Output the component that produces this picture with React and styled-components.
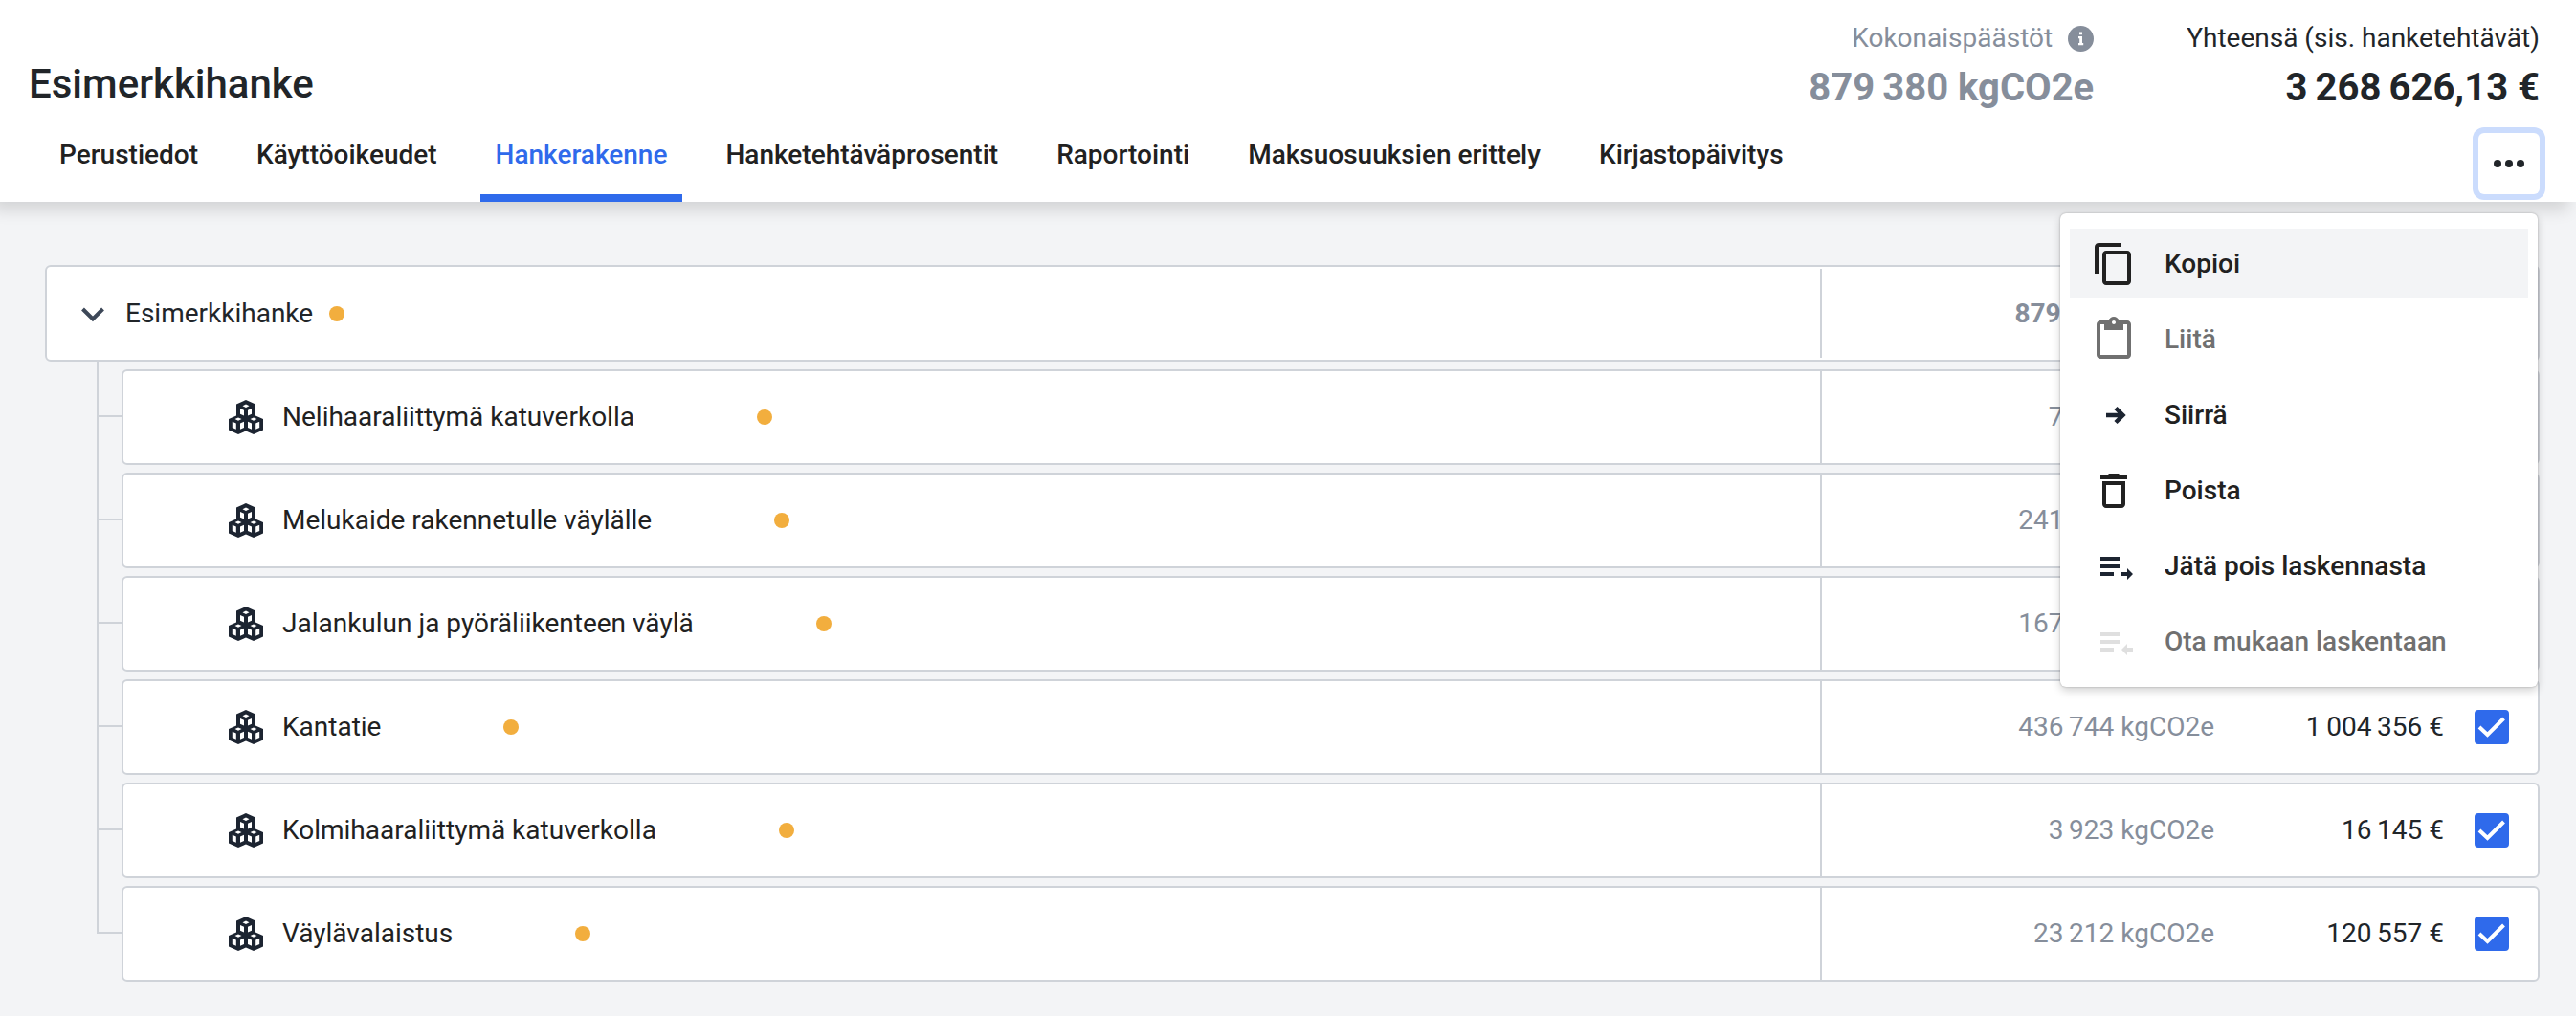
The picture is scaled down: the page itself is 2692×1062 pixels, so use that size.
import React from "react";
import styled, { createGlobalStyle, css } from "styled-components";
import { MdContentCopy, MdContentPaste, MdDeleteOutline } from "react-icons/md";

const colors = {
  page: "#f3f4f6",
  surface: "#ffffff",
  line: "#cfd3d9",
  ink: "#212529",
  strong: "#212121",
  navy: "#1c2431",
  muted: "#868e9b",
  disabled: "#707070",
  faint: "#dfdfdf",
  primary: "#2f6aeb",
  ring: "#cbdcfd",
  dot: "#f2ae3e",
};

const GlobalStyle = createGlobalStyle`
  *, *::before, *::after { box-sizing: border-box; }
  html, body { margin: 0; background: ${colors.page}; }
  body {
    font-family: Roboto, "Liberation Sans", sans-serif;
    font-size: 28px;
    line-height: 36px;
    color: ${colors.ink};
    -webkit-font-smoothing: antialiased;
  }
  button, input { font: inherit; color: inherit; margin: 0; }
`;

const Header = styled.header`
  background: ${colors.surface};
  box-shadow: -8px 8px 16px rgba(0, 0, 0, 0.14);
`;

const Summary = styled.div`
  display: flex;
  justify-content: space-between;
  align-items: flex-start;
  padding: 22px 38px 15px 30px;
`;

const Title = styled.h1`
  margin: 0;
  padding-top: 41px;
  font-size: 42px;
  line-height: 50px;
  font-weight: 500;
`;

const Totals = styled.div`
  display: flex;
  gap: 97px;
`;

const Total = styled.div`
  display: flex;
  flex-direction: column;
  align-items: flex-end;
  gap: 10px;
  color: ${(p) => (p.$muted ? colors.muted : colors.ink)};
`;

const TotalLabel = styled.div`
  display: flex;
  align-items: center;
  gap: 16px;
`;

const TotalValue = styled.div`
  font-size: 40px;
  line-height: 48px;
  font-weight: 700;
  white-space: nowrap;
`;

const Bar = styled.div`
  display: flex;
  justify-content: space-between;
  padding: 0 38px 0 46px;
`;

const Tabs = styled.nav`
  display: flex;
  gap: 29px;
  padding-top: 9px;
`;

const Tab = styled.a`
  display: block;
  height: 71px;
  padding: 4px 16px 0;
  border-bottom: 8px solid ${(p) => (p.$active ? colors.primary : "transparent")};
  color: ${(p) => (p.$active ? colors.primary : colors.strong)};
  font-weight: 500;
  text-decoration: none;
`;

const MenuAnchor = styled.div`
  position: relative;
`;

const MoreButton = styled.button`
  display: flex;
  align-items: center;
  justify-content: center;
  width: 64px;
  height: 64px;
  margin-top: 8px;
  padding: 0;
  border: 0;
  border-radius: 6px;
  background: ${colors.surface};
  box-shadow: 0 0 0 6px ${colors.ring};
  color: ${colors.ink};
`;

const Menu = styled.ul`
  position: absolute;
  z-index: 2;
  top: 92px;
  right: 2px;
  display: flex;
  flex-direction: column;
  gap: 6px;
  width: 499px;
  margin: 0;
  padding: 16px 10px 11px;
  list-style: none;
  border-radius: 6px;
  background: ${colors.surface};
  box-shadow: 0 0 2px rgba(0, 0, 0, 0.3), 0 4px 10px rgba(0, 0, 0, 0.18);
`;

const MenuItem = styled.button`
  display: flex;
  align-items: center;
  gap: 29px;
  width: 100%;
  height: 73px;
  padding: 0 22px;
  border: 0;
  background: ${(p) => (p.$hovered ? colors.page : "transparent")};
  color: ${colors.strong};
  font-weight: 500;
  text-align: left;
  white-space: nowrap;

  &:disabled { color: ${colors.disabled}; }
  svg { flex: none; }
`;

const Tree = styled.main`
  padding: 66px 38px 34px 47px;
`;

const Children = styled.ul`
  margin: 0;
  padding: 0 0 0 54px;
  list-style: none;
`;

const Child = styled.li`
  display: grid;
  grid-template-columns: 26px 1fr;
`;

const Connector = styled.div`
  display: flex;
  flex-direction: column;
`;

const Elbow = styled.span`
  height: 58px;
  border-left: 2px solid ${colors.line};
  border-bottom: 2px solid ${colors.line};
`;

const Stem = styled.span`
  flex: 1;
  border-left: 2px solid ${(p) => (p.$last ? "transparent" : colors.line)};
`;

const Row = styled.div`
  display: flex;
  min-height: 100px;
  border: 2px solid ${colors.line};
  border-radius: 6px;
  background: ${colors.surface};
  ${(p) => (p.$root ? css`min-height: 101px;` : css`margin-top: 8px;`)}
`;

const NameCell = styled.div`
  flex: 1;
  display: flex;
  align-items: center;
  padding-left: ${(p) => (p.$root ? 34 : 110)}px;
`;

const ToggleButton = styled.button`
  display: flex;
  padding: 0;
  border: 0;
  background: none;
  color: #3d4858;
`;

const Name = styled.span`
  margin: 0 ${(p) => (p.$root ? 17 : 128)}px 0 20px;
  color: ${(p) => (p.$root ? colors.ink : colors.strong)};
`;

const StatusDot = styled.span`
  width: 16px;
  height: 16px;
  border-radius: 50%;
  background: ${colors.dot};
`;

const Figures = styled.div`
  display: grid;
  grid-template-columns: 1fr 240px 68px;
  align-items: center;
  width: 750px;
  margin: ${(p) => (p.$root ? 2 : 0)}px 0;
  padding-right: 30px;
  border-left: 2px solid ${colors.line};
  text-align: right;
  white-space: nowrap;
  font-weight: ${(p) => (p.$root ? 700 : 400)};
`;

const Emission = styled.span`
  color: ${colors.muted};
`;

const Price = styled.span``;

const CheckLabel = styled.label`
  display: grid;
  justify-self: end;

  > * { grid-area: 1 / 1; }
  svg { pointer-events: none; }
`;

const Checkbox = styled.input`
  appearance: none;
  width: 36px;
  height: 36px;
  border-radius: 4px;
  border: 2px solid ${colors.line};
  background: ${colors.surface};

  &:checked {
    border-color: ${colors.primary};
    background: ${colors.primary};
  }
`;

const InfoIcon = () => (
  <svg width="27" height="27" viewBox="0 0 27 27" aria-hidden="true">
    <circle cx="13.5" cy="13.5" r="13.5" fill={colors.muted} />
    <path d="M12 6.500h3v2.800h-3zM11 11h4v7h1.200v2.200H11V18h1.200v-4.800H11z" fill="#fff" />
  </svg>
);

const DotsIcon = () => (
  <svg width="32" height="8" viewBox="0 0 32 8" fill="currentColor" aria-hidden="true">
    <circle cx="4" cy="4" r="4" />
    <circle cx="16" cy="4" r="4" />
    <circle cx="28" cy="4" r="4" />
  </svg>
);

const ChevronIcon = () => (
  <svg width="28" height="28" viewBox="0 0 28 28" fill="none" stroke="currentColor" strokeWidth="4" aria-hidden="true">
    <path d="M3.5 9 14 19.500 24.500 9" />
  </svg>
);

const BoxesIcon = () => (
  <svg width="36" height="36" viewBox="0 0 36 36" fill={colors.navy} fillRule="evenodd" aria-hidden="true">
    <path
      d="M18 0 28 4.500V16.500L36 20V31.500L26 36 18 32.500 10 36 0 31.500V20L8 16.500V4.500z
         M18 4.600 14.500 6.300 18 8 21.500 6.300z M12 9V14.800L16 16.600V10.800z M24 9 20 10.800V16.600L24 14.800z
         M10 18.400 6.500 20.100 10 21.800 13.500 20.100z M3.800 22.800V29L7.800 30.800V24.600z M16 22.800 12 24.600V30.800L16 29z
         M26 18.400 22.500 20.100 26 21.800 29.500 20.100z M20 22.800V29L24 30.800V24.600z M32.200 22.800 28.200 24.600V30.800L32.200 29z"
    />
  </svg>
);

const ArrowIcon = () => (
  <svg width="48" height="48" viewBox="0 0 48 48" fill="none" stroke={colors.navy} strokeWidth="4.500" aria-hidden="true">
    <path d="M16 24H33M26 16.500 33.500 24 26 31.500" />
  </svg>
);

const ListArrowIcon = ({ back, color }) => (
  <svg width="48" height="48" viewBox="0 0 48 48" fill={color} aria-hidden="true">
    <path d="M10 14h20v4H10zM10 22h20v4H10zM10 30h14v4H10z" />
    {back ? <path d="M44 30v4h-6v4l-6-6 6-6v4z" /> : <path d="M32 30v4h6v4l6-6-6-6v4z" />}
  </svg>
);

const CheckIcon = () => (
  <svg width="36" height="36" viewBox="0 0 36 36" fill="none" stroke="#fff" strokeWidth="4" aria-hidden="true">
    <path d="M5 18 13.500 26 30.500 9" />
  </svg>
);

const tabs = [
  "Perustiedot",
  "Käyttöoikeudet",
  "Hankerakenne",
  "Hanketehtäväprosentit",
  "Raportointi",
  "Maksuosuuksien erittely",
  "Kirjastopäivitys",
];

const actions = [
  { label: "Kopioi", icon: <MdContentCopy size={48} />, hovered: true },
  { label: "Liitä", icon: <MdContentPaste size={48} />, disabled: true },
  { label: "Siirrä", icon: <ArrowIcon /> },
  { label: "Poista", icon: <MdDeleteOutline size={48} /> },
  { label: "Jätä pois laskennasta", icon: <ListArrowIcon color={colors.navy} /> },
  { label: "Ota mukaan laskentaan", icon: <ListArrowIcon back color={colors.faint} />, disabled: true },
];

const parts = [
  { name: "Nelihaaraliittymä katuverkolla", emission: "7\u2009184" },
  { name: "Melukaide rakennetulle väylälle", emission: "241\u2009103" },
  { name: "Jalankulun ja pyöräliikenteen väylä", emission: "167\u2009214" },
  { name: "Kantatie", emission: "436\u2009744", price: "1\u2009004\u2009356 €" },
  { name: "Kolmihaaraliittymä katuverkolla", emission: "3\u2009923", price: "16\u2009145 €" },
  { name: "Väylävalaistus", emission: "23\u2009212", price: "120\u2009557 €" },
];

export default function App() {
  return (
    <>
      <GlobalStyle />
      <Header>
        <Summary>
          <Title>Esimerkkihanke</Title>
          <Totals>
            <Total $muted>
              <TotalLabel>
                Kokonaispäästöt
                <InfoIcon />
              </TotalLabel>
              <TotalValue>{"879\u2009380 kgCO2e"}</TotalValue>
            </Total>
            <Total>
              <TotalLabel>Yhteensä (sis. hanketehtävät)</TotalLabel>
              <TotalValue>{"3\u2009268\u2009626,13 €"}</TotalValue>
            </Total>
          </Totals>
        </Summary>
        <Bar>
          <Tabs>
            {tabs.map((tab) => (
              <Tab key={tab} href="#" $active={tab === "Hankerakenne"}>
                {tab}
              </Tab>
            ))}
          </Tabs>
          <MenuAnchor>
            <MoreButton type="button" aria-label="Toiminnot" aria-expanded="true">
              <DotsIcon />
            </MoreButton>
            <Menu>
              {actions.map((action) => (
                <li key={action.label}>
                  <MenuItem type="button" disabled={action.disabled} $hovered={action.hovered}>
                    {action.icon}
                    {action.label}
                  </MenuItem>
                </li>
              ))}
            </Menu>
          </MenuAnchor>
        </Bar>
      </Header>
      <Tree>
        <Row $root>
          <NameCell $root>
            <ToggleButton type="button" aria-label="Sulje" aria-expanded="true">
              <ChevronIcon />
            </ToggleButton>
            <Name $root>Esimerkkihanke</Name>
            <StatusDot />
          </NameCell>
          <Figures $root>
            <Emission>{"879\u2009380 kgCO2e"}</Emission>
          </Figures>
        </Row>
        <Children>
          {parts.map((part, index) => (
            <Child key={part.name}>
              <Connector>
                <Elbow />
                <Stem $last={index === parts.length - 1} />
              </Connector>
              <Row>
                <NameCell>
                  <BoxesIcon />
                  <Name>{part.name}</Name>
                  <StatusDot />
                </NameCell>
                <Figures>
                  <Emission>{part.emission} kgCO2e</Emission>
                  <Price>{part.price}</Price>
                  <CheckLabel>
                    <Checkbox type="checkbox" defaultChecked aria-label={part.name} />
                    <CheckIcon />
                  </CheckLabel>
                </Figures>
              </Row>
            </Child>
          ))}
        </Children>
      </Tree>
    </>
  );
}
